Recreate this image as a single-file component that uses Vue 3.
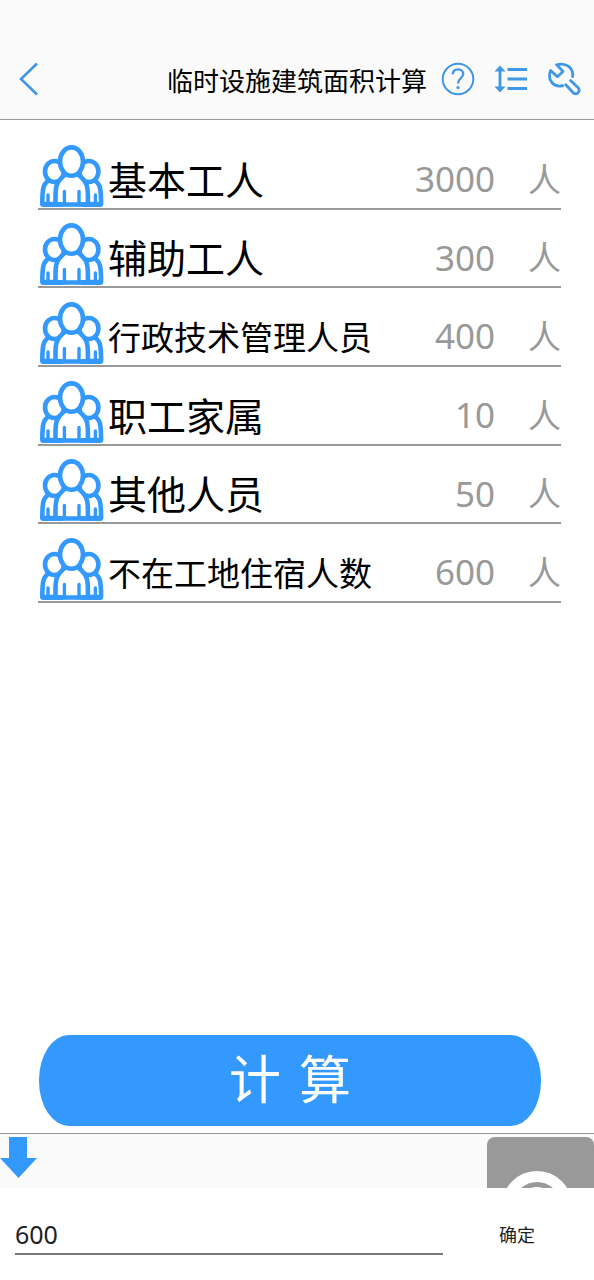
<script setup>
import { ref, reactive, computed } from 'vue'

const rows = reactive([
  { id: 'basic', label: '基本工人', value: '3000' },
  { id: 'assist', label: '辅助工人', value: '300' },
  { id: 'admin', label: '行政技术管理人员', value: '400', long: true },
  { id: 'family', label: '职工家属', value: '10' },
  { id: 'other', label: '其他人员', value: '50' },
  { id: 'offsite', label: '不在工地住宿人数', value: '600', long: true }
])

const active = ref(5)
const draft = computed({
  get: () => rows[active.value].value,
  set: (v) => { rows[active.value].value = v }
})
</script>

<template>
  <div class="page">
    <header class="header">
      <button class="icon-btn back" type="button" aria-label="返回">
        <svg width="20" height="34" viewBox="0 0 20 34">
          <path d="M19 1.5 L3 17 L19 32.5" fill="none" stroke="#3f97e6" stroke-width="2.6" />
        </svg>
      </button>
      <h1 class="title">临时设施建筑面积计算</h1>
      <nav class="tools">
        <button class="icon-btn" type="button" aria-label="帮助">
          <svg width="34" height="34" viewBox="0 0 34 34" fill="none" stroke="#3f97e6">
            <circle cx="17" cy="17" r="15.3" stroke-width="2" />
            <path d="M11.7 12.4 C11.9 9 14 7.4 17 7.4 C20 7.4 22.2 9.3 22.2 12 C22.2 15.8 17 16.4 17 21.4" stroke-width="2.4" />
            <circle cx="17" cy="25.6" r="1.6" fill="#3f97e6" stroke="none" />
          </svg>
        </button>
        <button class="icon-btn" type="button" aria-label="行距">
          <svg width="34" height="34" viewBox="0 0 34 34" fill="#3f97e6">
            <path d="M6 3.5 L11.5 9.5 H7.4 V24.5 H11.5 L6 30.5 L0.5 24.5 H4.6 V9.5 H0.5 Z" />
            <path d="M13.5 6 H33 V9 H13.5 Z M13.5 15.5 H33 V18.5 H13.5 Z M13.5 25 H33 V28 H13.5 Z" />
          </svg>
        </button>
        <button class="icon-btn" type="button" aria-label="工具">
          <svg width="34" height="34" viewBox="0 0 34 34" fill="none" stroke="#3f97e6" stroke-width="2.8" stroke-linecap="round" stroke-linejoin="round">
            <path d="M25.6 14.5 C26.8 6 19 0 9.6 2.8 L16 9.4 L10.4 14.8 L3.6 8.4 C0 18 6.5 26 15.8 23.6" />
            <path d="M23.6 18.6 L31.4 26 C33.6 29.4 29.8 33.4 26.4 31 L18.8 22.8" />
          </svg>
        </button>
      </nav>
    </header>

    <main class="main">
      <form class="form" @submit.prevent>
        <div v-for="(row, i) in rows" :key="row.id" class="row">
          <svg class="people" width="66" height="64" viewBox="0 0 66 64" fill="#fff" stroke="#3399ff" stroke-width="4.6" stroke-linejoin="round" stroke-linecap="round">
            <path d="M14 34 C5 39 4.3 43 4.3 60 H30 V34 Z" />
            <path d="M53.4 34 C62.4 39 63.1 43 63.1 60 H37 V34 Z" />
            <ellipse cx="16.5" cy="27.5" rx="9.5" ry="10.5" />
            <ellipse cx="50.9" cy="27.5" rx="9.5" ry="10.5" />
            <path d="M10 51 V59 M57.4 51 V59" stroke-width="3.4" />
            <path d="M28 30 C19 37 17.5 41 17.5 52 V60.5 H49.9 V52 C49.9 41 48.4 37 39.4 30 Z" />
            <path d="M26.4 47.5 V59 M41 47.5 V59" stroke-width="3.4" />
            <path d="M5 60.5 H23 M44.4 60.5 H62.4" stroke-width="5" />
            <ellipse cx="33.5" cy="17.6" rx="11.5" ry="14.2" />
          </svg>
          <label class="name" :class="{ long: row.long }" :for="row.id">{{ row.label }}</label>
          <input :id="row.id" v-model="row.value" class="value" type="text" inputmode="numeric" @focus="active = i" />
          <span class="unit">人</span>
        </div>
      </form>
      <button class="submit" type="button"><span>计</span><span>算</span></button>
    </main>

    <section class="dock">
      <button class="icon-btn" type="button" aria-label="收起">
        <svg width="37" height="44" viewBox="0 0 37 44">
          <path d="M9 3 H27 V24 H37 L18.5 44 L0 24 H9 Z" fill="#3399ff" />
        </svg>
      </button>
      <button class="tile" type="button" aria-label="查看">
        <svg width="107" height="51" viewBox="0 0 107 51" fill="none" stroke="#fff">
          <circle cx="50" cy="69" r="29.5" stroke-width="11" />
          <circle cx="50" cy="69" r="19" fill="#fff" stroke="none" />
        </svg>
      </button>
    </section>

    <form class="editor" @submit.prevent>
      <input v-model="draft" class="draft" type="text" inputmode="numeric" aria-label="数值" />
      <button class="confirm" type="submit">确定</button>
    </form>
  </div>
</template>

<style>
body {
  margin: 0;
  background: #fff;
}
</style>

<style scoped>
.page {
  display: flex;
  flex-direction: column;
  min-height: 100vh;
  font-family: "Noto Sans", "Noto Sans CJK SC", sans-serif;
  color: #000;
}
.page * {
  box-sizing: border-box;
}
button,
input {
  margin: 0;
  padding: 0;
  border: 0;
  border-radius: 0;
  background: none;
  font-family: inherit;
  outline: none;
}
svg {
  display: block;
}
.icon-btn {
  flex: none;
  display: block;
}
.header {
  display: flex;
  align-items: center;
  padding: 38px 13px 0 18px;
  height: 120px;
  background: #fafafa;
  border-bottom: 1px solid #999;
}
.title {
  margin: 0 14px 0 auto;
  padding-top: 4px;
  font-size: 26px;
  line-height: 36px;
  font-weight: 400;
  white-space: nowrap;
}
.tools {
  display: flex;
  gap: 19px;
}
.main {
  flex: 1;
  display: flex;
  flex-direction: column;
  justify-content: space-between;
  padding: 11px 33px 7px 38px;
}
.form {
  display: grid;
  grid-template-columns: minmax(0, 1fr);
  grid-auto-rows: 1fr;
  height: 472px;
}
.row {
  display: flex;
  align-items: flex-end;
  border-bottom: 2px solid #999;
}
.people {
  flex: none;
  margin-right: 4px;
}
.name {
  flex: none;
  font-size: 39px;
  line-height: 56px;
  white-space: nowrap;
}
.name.long {
  font-size: 33px;
  line-height: 54px;
}
.value {
  flex: 1;
  min-width: 0;
  width: 0;
  height: 58px;
  text-align: right;
  font-size: 35px;
  color: #999;
}
.unit {
  flex: none;
  width: 66px;
  text-align: right;
  font-size: 33px;
  line-height: 56px;
  color: #999;
}
.submit {
  display: flex;
  justify-content: center;
  align-items: center;
  gap: 18px;
  margin-right: 20px;
  margin-left: 1px;
  padding-bottom: 4px;
  height: 91px;
  border-radius: 30px / 45px;
  background: #3399ff;
  color: #fff;
  font-size: 52px;
  line-height: 76px;
}
.dock {
  display: flex;
  justify-content: space-between;
  align-items: flex-start;
  height: 55px;
  background: #fafafa;
  border-top: 1px solid #999;
}
.tile {
  margin-top: 3px;
  border-radius: 8px 8px 0 0;
  background: #999;
  overflow: hidden;
}
.editor {
  display: flex;
  align-items: center;
  padding: 27px 15px 25px;
}
.draft {
  flex: 1;
  min-width: 0;
  height: 40px;
  border-bottom: 2px solid #777;
  font-size: 25px;
  color: #222;
}
.confirm {
  width: 136px;
  padding-left: 12px;
  font-size: 18px;
  line-height: 40px;
  color: #222;
}
</style>
